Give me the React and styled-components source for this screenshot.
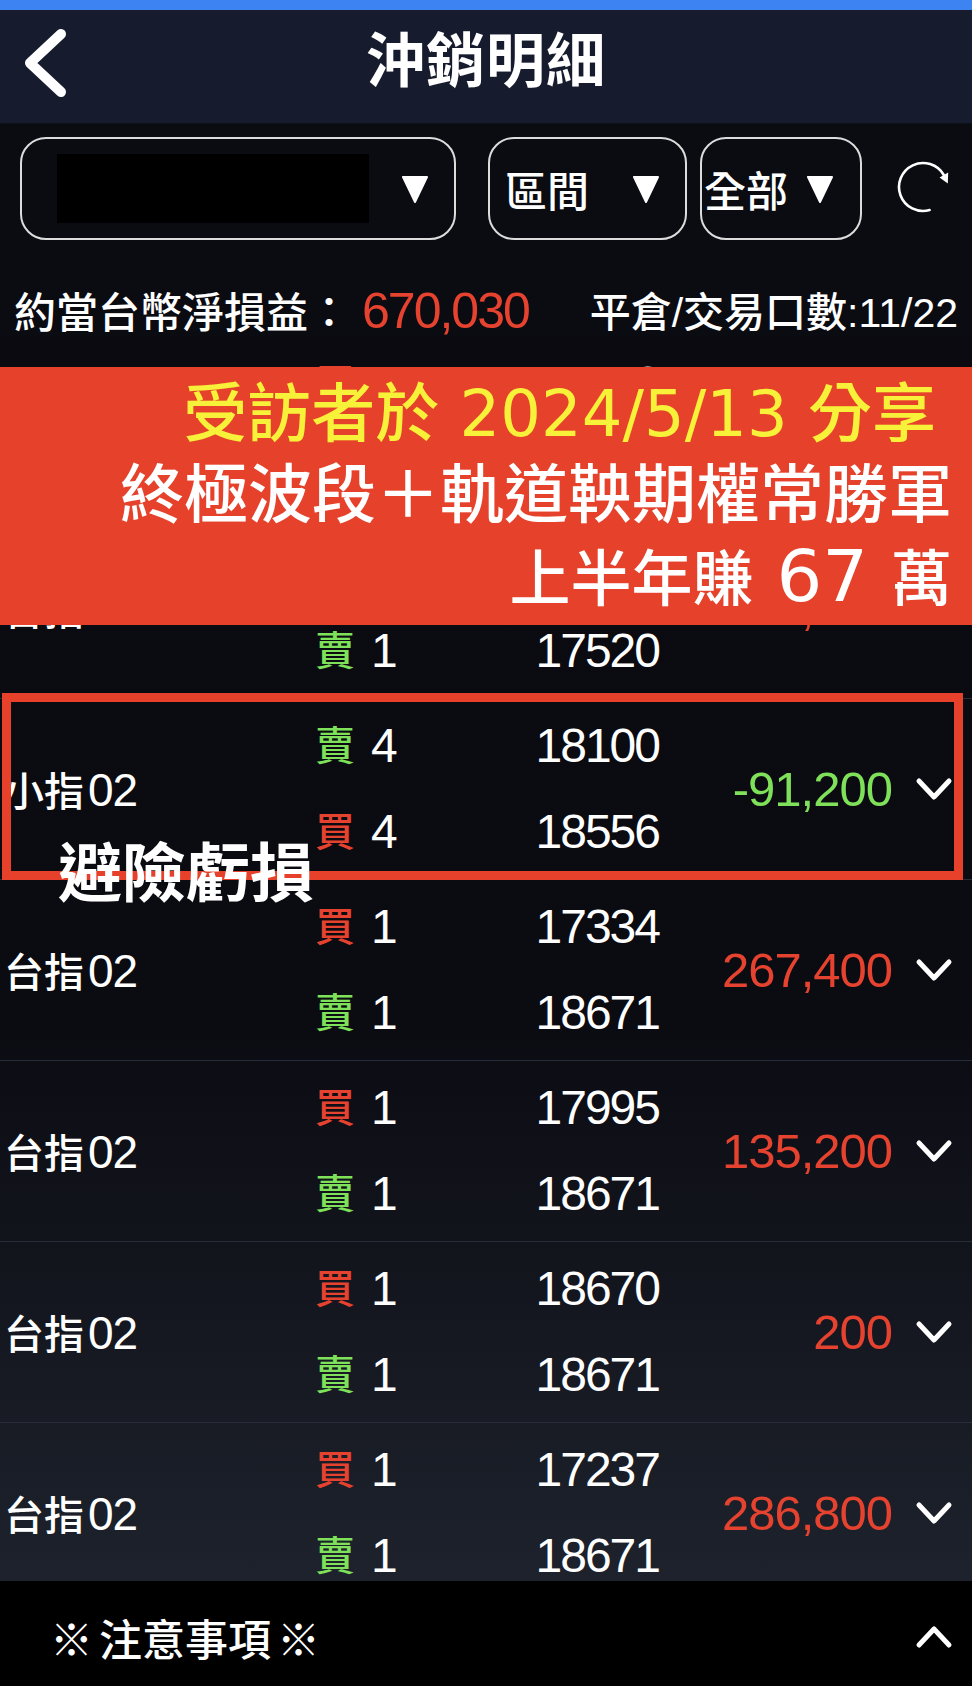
import React from 'react';
import styled, { createGlobalStyle } from 'styled-components';

const SANS = `"Liberation Sans", "Noto Sans CJK TC", sans-serif`;
const WIDE_DIGITS = `"DejaVu Sans", "Noto Sans CJK TC", sans-serif`;

const RED = '#e5432f';
const GREEN = '#7fe05a';

const GlobalStyle = createGlobalStyle`
  html, body {
    margin: 0;
    padding: 0;
    background: #0b0b12;
  }
  * { box-sizing: border-box; }
`;

const Screen = styled.div`
  position: relative;
  width: 972px;
  height: 1686px;
  overflow: hidden;
  display: flex;
  flex-direction: column;
  background: #0b0b12;
  color: #fff;
  font-family: ${SANS};
`;

const StatusStrip = styled.div`
  flex-shrink: 0;
  height: 10px;
  background: #3d84f2;
`;

const NavBar = styled.header`
  flex-shrink: 0;
  height: 114px;
  display: grid;
  grid-template-columns: 1fr auto 1fr;
  align-items: center;
  padding-bottom: 8px;
  background: #161c2e;
  border-bottom: 1px solid #0c1019;
`;

const BackButton = styled.div`
  padding-left: 22px;
  display: flex;
  align-items: center;
`;

const Title = styled.h1`
  margin: 0;
  font-size: 59px;
  font-weight: 700;
  letter-spacing: 1px;
  line-height: 1;
`;

const FilterBar = styled.div`
  flex-shrink: 0;
  display: flex;
  align-items: flex-start;
  padding: 13px 0 0 20px;
  height: 116px;
`;

const Dropdown = styled.div`
  width: ${p => p.$w}px;
  height: 103px;
  margin-right: ${p => p.$gap || 0}px;
  padding: 0 ${p => p.$pr}px 0 ${p => p.$pl}px;
  border: 2px solid #dcdcdc;
  border-radius: 26px;
  display: flex;
  align-items: center;
  justify-content: space-between;
  font-size: 42px;
  font-weight: 500;
`;

const Masked = styled.div`
  width: 312px;
  height: 69px;
  background: #000;
`;

const RefreshButton = styled.div`
  margin-left: 33px;
  margin-top: 22px;
  width: 56px;
  height: 56px;
`;

const Summary = styled.div`
  flex-shrink: 0;
  height: 97px;
  display: flex;
  align-items: center;
  justify-content: space-between;
  padding: 41px 14px 0 14px;
  font-weight: 500;
`;

const SummaryLabel = styled.span`
  display: flex;
  align-items: baseline;
  font-size: 42px;
`;

const Amount = styled.span`
  margin-left: 12px;
  font-size: 50px;
  letter-spacing: -2px;
  color: ${RED};
`;

const Count = styled.span`
  font-size: 41px;
`;

const List = styled.div`
  flex: 1;
  overflow: hidden;
  background: linear-gradient(to bottom, #0a0a10 0%, #0b0b12 55%, #1d222c 100%);
`;

const Row = styled.div`
  height: 181px;
  border-bottom: 1px solid #282e39;
  display: grid;
  grid-template-columns: 311px 100px 244px 233px 1fr;
  align-items: center;
  padding-left: 4px;
`;

const Name = styled.div`
  display: flex;
  align-items: baseline;
  font-size: 40px;
  font-weight: 500;
  white-space: nowrap;
`;

const Code = styled.span`
  margin-left: 4px;
  font-size: 46px;
  font-weight: 400;
  letter-spacing: -1px;
`;

const Stack = styled.div`
  display: flex;
  flex-direction: column;
  gap: 42px;
  align-items: ${p => (p.$right ? 'flex-end' : 'flex-start')};
`;

const Line = styled.div`
  height: 44px;
  line-height: 44px;
  display: flex;
  align-items: center;
  font-size: 48px;
  letter-spacing: -2px;
  white-space: nowrap;
`;

const Side = styled.span`
  font-size: 40px;
  font-weight: 500;
  letter-spacing: 0;
  color: ${p => (p.$buy ? RED : GREEN)};
  margin-right: 16px;
`;

const Pnl = styled.div`
  justify-self: end;
  font-size: 49px;
  letter-spacing: -1px;
  color: ${p => (p.$loss ? GREEN : RED)};
`;

const Expand = styled.div`
  padding-left: 23px;
  display: flex;
  align-items: center;
`;

const Footer = styled.footer`
  flex-shrink: 0;
  height: 105px;
  background: #000;
  display: flex;
  align-items: center;
  justify-content: space-between;
  padding: 6px 19px 0 50px;
  font-size: 43px;
  font-weight: 500;
`;

const Mark = styled.span`
  margin: 0 ${p => (p.$end ? 0 : 6)}px 0 ${p => (p.$end ? 6 : 0)}px;
`;

const Banner = styled.div`
  position: absolute;
  top: 367px;
  left: 0;
  width: 972px;
  height: 258px;
  padding: 7px 20px 0 0;
  background: #e6412a;
  text-align: right;
  font-weight: 500;
`;

const BannerLine = styled.div`
  font-size: ${p => p.$size || 64}px;
  line-height: 81px;
  white-space: pre;
  color: ${p => p.$color || '#fff'};
  padding-right: ${p => p.$pr || 0}px;
`;

const BannerNum = styled.span`
  font-family: ${WIDE_DIGITS};
  font-weight: 400;
  font-size: ${p => p.$size}px;
`;

const HighlightFrame = styled.div`
  position: absolute;
  top: 693px;
  left: 2px;
  width: 961px;
  height: 187px;
  border: 9px solid #e8412b;
`;

const HedgeLabel = styled.div`
  position: absolute;
  top: 842px;
  left: 58px;
  font-size: 64px;
  line-height: 64px;
  font-weight: 700;
`;

const BackChevron = () => (
  <svg width="46" height="70" viewBox="0 0 46 70">
    <polyline points="39,6 8,35 39,64" fill="none" stroke="#fff" strokeWidth="10" strokeLinecap="round" strokeLinejoin="round" />
  </svg>
);

const Caret = () => (
  <svg width="28" height="28" viewBox="0 0 28 28">
    <polygon points="2,2 26,2 14,27" fill="#fff" stroke="#fff" strokeWidth="2" strokeLinejoin="round" />
  </svg>
);

const RefreshIcon = () => (
  <svg width="56" height="56" viewBox="0 0 56 56">
    <path d="M34.6 51.1 A24 24 0 1 1 48.8 16" fill="none" stroke="#fff" strokeWidth="2.6" strokeLinecap="round" />
    <polygon points="52.8,24.5 53.2,13.6 44.6,18.6" fill="#fff" />
  </svg>
);

const Chevron = ({ up }) => (
  <svg width="38" height="26" viewBox="0 0 38 26" style={up ? { transform: 'rotate(180deg)' } : undefined}>
    <polyline points="4,5 19,21 34,5" fill="none" stroke="#fff" strokeWidth="5" strokeLinecap="round" strokeLinejoin="round" />
  </svg>
);

const trades = [
  { name: '台指', code: '02', legs: [['買', '1', '17542'], ['賣', '1', '18671']], pnl: '225,800' },
  { name: '台指', code: '02', legs: [['買', '1', '18186'], ['賣', '1', '17520']], pnl: '133,200' },
  { name: '小指', code: '02', legs: [['賣', '4', '18100'], ['買', '4', '18556']], pnl: '-91,200', loss: true },
  { name: '台指', code: '02', legs: [['買', '1', '17334'], ['賣', '1', '18671']], pnl: '267,400' },
  { name: '台指', code: '02', legs: [['買', '1', '17995'], ['賣', '1', '18671']], pnl: '135,200' },
  { name: '台指', code: '02', legs: [['買', '1', '18670'], ['賣', '1', '18671']], pnl: '200' },
  { name: '台指', code: '02', legs: [['買', '1', '17237'], ['賣', '1', '18671']], pnl: '286,800' },
];

const TradeRow = ({ trade }) => (
  <Row>
    <Name>
      {trade.name}
      <Code>{trade.code}</Code>
    </Name>
    <Stack>
      {trade.legs.map(([side, qty], i) => (
        <Line key={i}>
          <Side $buy={side === '買'}>{side}</Side>
          {qty}
        </Line>
      ))}
    </Stack>
    <Stack $right>
      {trade.legs.map(([, , price], i) => (
        <Line key={i}>{price}</Line>
      ))}
    </Stack>
    <Pnl $loss={trade.loss}>{trade.pnl}</Pnl>
    <Expand>
      <Chevron />
    </Expand>
  </Row>
);

export default function App() {
  return (
    <Screen>
      <GlobalStyle />
      <StatusStrip />
      <NavBar>
        <BackButton>
          <BackChevron />
        </BackButton>
        <Title>沖銷明細</Title>
        <div />
      </NavBar>

      <FilterBar>
        <Dropdown $w={436} $gap={32} $pl={35} $pr={25}>
          <Masked />
          <Caret />
        </Dropdown>
        <Dropdown $w={199} $gap={13} $pl={15} $pr={25}>
          <span>區間</span>
          <Caret />
        </Dropdown>
        <Dropdown $w={162} $pl={2} $pr={26}>
          <span>全部</span>
          <Caret />
        </Dropdown>
        <RefreshButton>
          <RefreshIcon />
        </RefreshButton>
      </FilterBar>

      <Summary>
        <SummaryLabel>
          約當台幣淨損益：<Amount>670,030</Amount>
        </SummaryLabel>
        <Count>平倉/交易口數:11/22</Count>
      </Summary>

      <List>
        {trades.map((t, i) => (
          <TradeRow key={i} trade={t} />
        ))}
      </List>

      <Footer>
        <span>
          <Mark>※</Mark>注意事項<Mark $end>※</Mark>
        </span>
        <Chevron up />
      </Footer>

      <Banner>
        <BannerLine $color="#f7f13a" $pr={16}>
          受訪者於<BannerNum $size={64}> 2024/5/13 </BannerNum>分享
        </BannerLine>
        <BannerLine>終極波段＋軌道鞅期權常勝軍</BannerLine>
        <BannerLine $size={61}>
          上半年賺<BannerNum $size={72}> 67 </BannerNum>萬
        </BannerLine>
      </Banner>

      <HighlightFrame />
      <HedgeLabel>避險虧損</HedgeLabel>
    </Screen>
  );
}
